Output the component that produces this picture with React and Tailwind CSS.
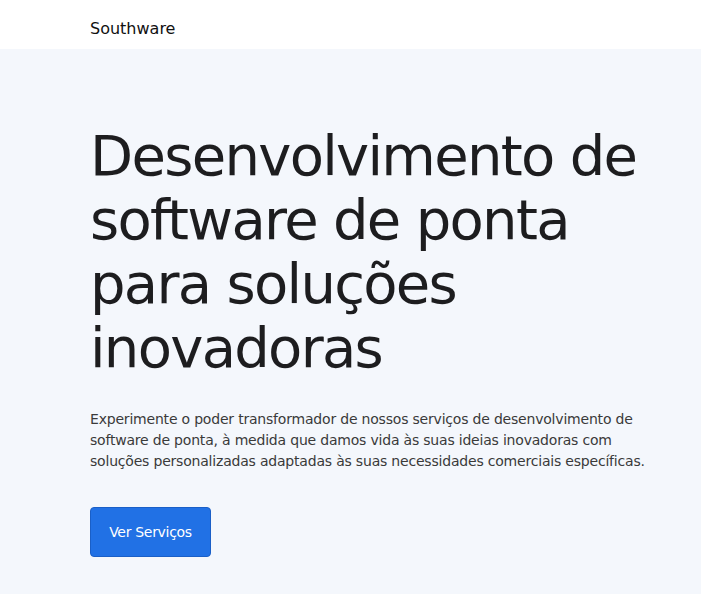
import React from "react";

const font = { fontFamily: '"DejaVu Sans", "Noto Sans", sans-serif' };

const App = () => {
  return (
    <div className="min-h-screen bg-[#f4f7fc] text-[#1c1c1c]" style={font}>
      <header className="h-[49px] bg-white">
        <div className="pl-[90px] pt-[17px]">
          <span className="text-[16px] leading-[18px] text-[#111]">Southware</span>
        </div>
      </header>

      <main className="pl-[90px] pr-[40px] pt-[75px] pb-10">
        <h1 className="text-[56px] leading-[64px] font-normal tracking-[-1.7px] text-[#1d1d1f] max-w-[560px]">
          Desenvolvimento de software de ponta para soluções inovadoras
        </h1>
        <p className="mt-[29px] text-[14px] leading-[21px] text-[#3a3a3a] max-w-[565px] tracking-[-0.2px]">
          Experimente o poder transformador de nossos serviços de desenvolvimento de
          software de ponta, à medida que damos vida às suas ideias inovadoras com
          soluções personalizadas adaptadas às suas necessidades comerciais específicas.
        </p>
        <button className="mt-[35px] h-[50px] w-[121px] rounded-[4px] bg-[#2171e5] border border-[#1a5fc7] text-white text-[14px] tracking-[-0.3px]">
          Ver Serviços
        </button>
      </main>
    </div>
  );
};

export default App;
